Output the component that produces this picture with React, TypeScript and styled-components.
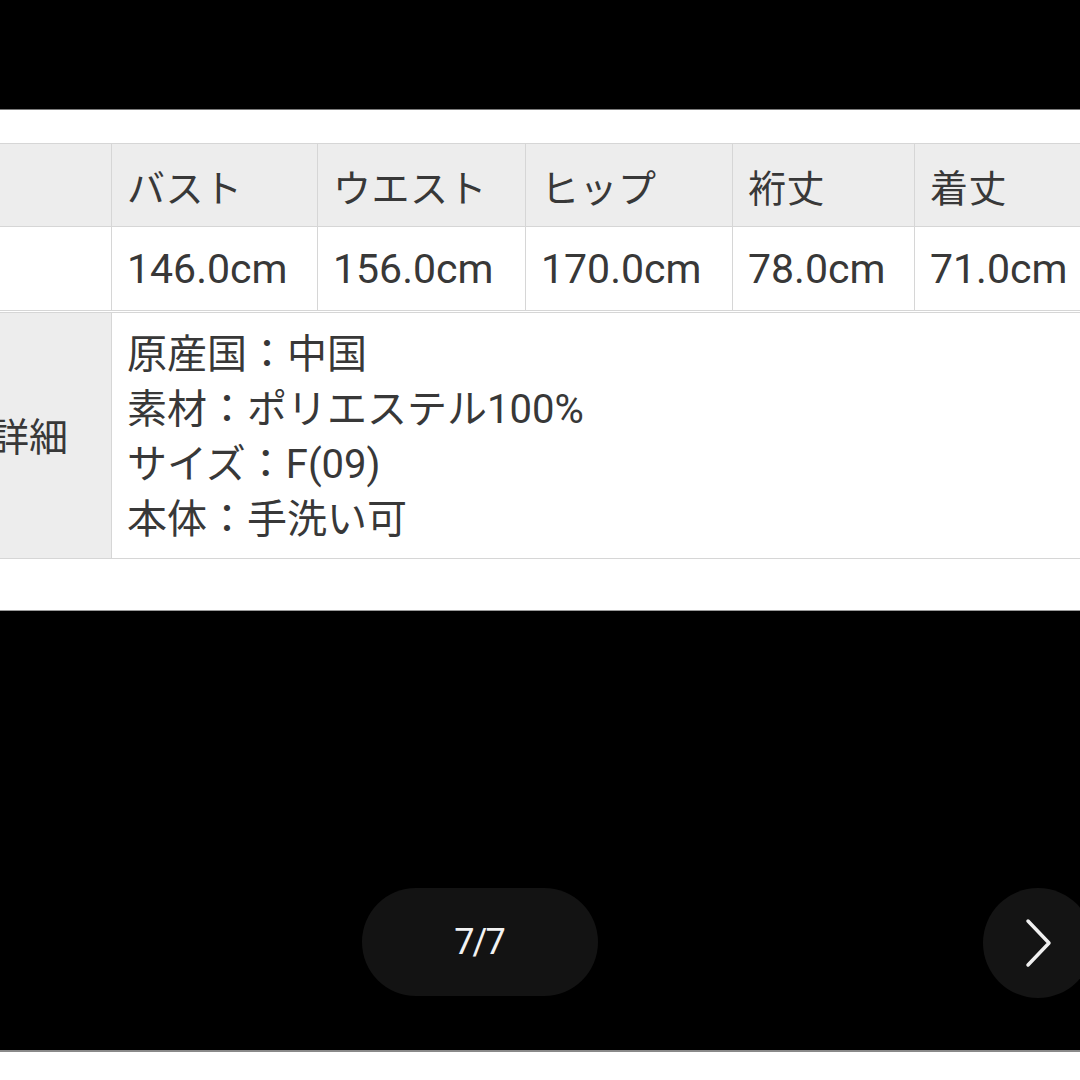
import React from "react";
import styled, { createGlobalStyle } from "styled-components";

const Global = createGlobalStyle`
  html, body { margin: 0; padding: 0; background: #000; }
  body { width: 1080px; height: 1080px; overflow: hidden; }
`;

const Page = styled.div`
  width: 1080px;
  height: 1080px;
  display: flex;
  flex-direction: column;
  background: #000;
  overflow: hidden;
  font-family: Roboto, "Noto Sans CJK JP", sans-serif;
`;

const TopBlack = styled.div`
  height: 109px;
  flex: none;
  background: #000;
  border-bottom: 1px solid #7a7a7a;
`;

const Sheet = styled.section`
  flex: none;
  height: 501px;
  background: #fff;
  padding-top: 33px;
  box-sizing: border-box;
  overflow: hidden;
  border-bottom: 1px solid #9a9a9a;
`;

const cols = "122px 206px 208px 207px 182px 200px";

const SizeGrid = styled.div`
  display: grid;
  grid-template-columns: ${cols};
  margin-left: -10px;
  border-top: 1px solid #d6d6d6;
`;

const Cell = styled.div<{ $head?: boolean }>`
  box-sizing: border-box;
  height: ${(p) => (p.$head ? 83 : 84)}px;
  display: flex;
  align-items: center;
  padding-left: 15px;
  background: ${(p) => (p.$head ? "#ededed" : "#fff")};
  border-right: 1px solid #d6d6d6;
  border-bottom: 1px solid #d6d6d6;
  color: #383838;
  font-size: ${(p) => (p.$head ? 38 : 41)}px;
  white-space: nowrap;
  letter-spacing: ${(p) => (p.$head ? "0.5px" : "0")};
`;

const DetailGrid = styled.div`
  display: grid;
  grid-template-columns: 122px 1001px;
  margin-left: -10px;
  margin-top: 1px;
  border-top: 1px solid #d6d6d6;
`;

const Label = styled.div`
  box-sizing: border-box;
  height: 246px;
  display: flex;
  align-items: center;
  padding-left: 0;
  padding-bottom: 4px;
  background: #ededed;
  border-right: 1px solid #d6d6d6;
  border-bottom: 1px solid #d6d6d6;
  color: #383838;
  font-size: 39px;
`;

const Details = styled.div`
  box-sizing: border-box;
  height: 246px;
  padding: 14px 0 0 15px;
  background: #fff;
  border-bottom: 1px solid #d6d6d6;
  color: #383838;
  font-size: 40px;
  line-height: 55px;
`;

const Line = styled.div`
  white-space: nowrap;
`;

const Stage = styled.div`
  flex: 1;
  display: flex;
  align-items: flex-start;
  padding: 277px 0 0 362px;
  background: #000;
`;

const Counter = styled.div`
  width: 236px;
  height: 108px;
  border-radius: 54px;
  background: #131313;
  display: flex;
  align-items: center;
  justify-content: center;
  color: #f2f2f2;
  font-size: 36px;
  letter-spacing: -2px;
  padding-right: 2px;
  box-sizing: border-box;
`;

const NextButton = styled.div`
  margin-left: auto;
  margin-right: -13px;
  width: 110px;
  height: 110px;
  border-radius: 50%;
  background: #141414;
  display: flex;
  align-items: center;
  justify-content: center;
  flex: none;
`;

const BottomWhite = styled.div`
  height: 28px;
  flex: none;
  background: #fff;
  border-top: 2px solid #8a8a8a;
`;

const heads = ["", "バスト", "ウエスト", "ヒップ", "裄丈", "着丈"];
const values = ["", "146.0cm", "156.0cm", "170.0cm", "78.0cm", "71.0cm"];

export default function App() {
  return (
    <Page>
      <Global />
      <TopBlack />
      <Sheet>
        <SizeGrid>
          {heads.map((h, i) => (
            <Cell key={"h" + i} $head>
              {h}
            </Cell>
          ))}
          {values.map((v, i) => (
            <Cell key={"v" + i}>{v}</Cell>
          ))}
        </SizeGrid>
        <DetailGrid>
          <Label>詳細</Label>
          <Details>
            <Line>原産国：中国</Line>
            <Line>素材：ポリエステル100%</Line>
            <Line>サイズ：F(09)</Line>
            <Line>本体：手洗い可</Line>
          </Details>
        </DetailGrid>
      </Sheet>
      <Stage>
        <Counter>7/7</Counter>
        <NextButton>
          <svg width="30" height="50" viewBox="0 0 30 50" fill="none">
            <path
              d="M5 3 L26 25 L5 47"
              stroke="#f0f0f0"
              strokeWidth="3.5"
              strokeLinecap="round"
              strokeLinejoin="round"
            />
          </svg>
        </NextButton>
      </Stage>
      <BottomWhite />
    </Page>
  );
}
